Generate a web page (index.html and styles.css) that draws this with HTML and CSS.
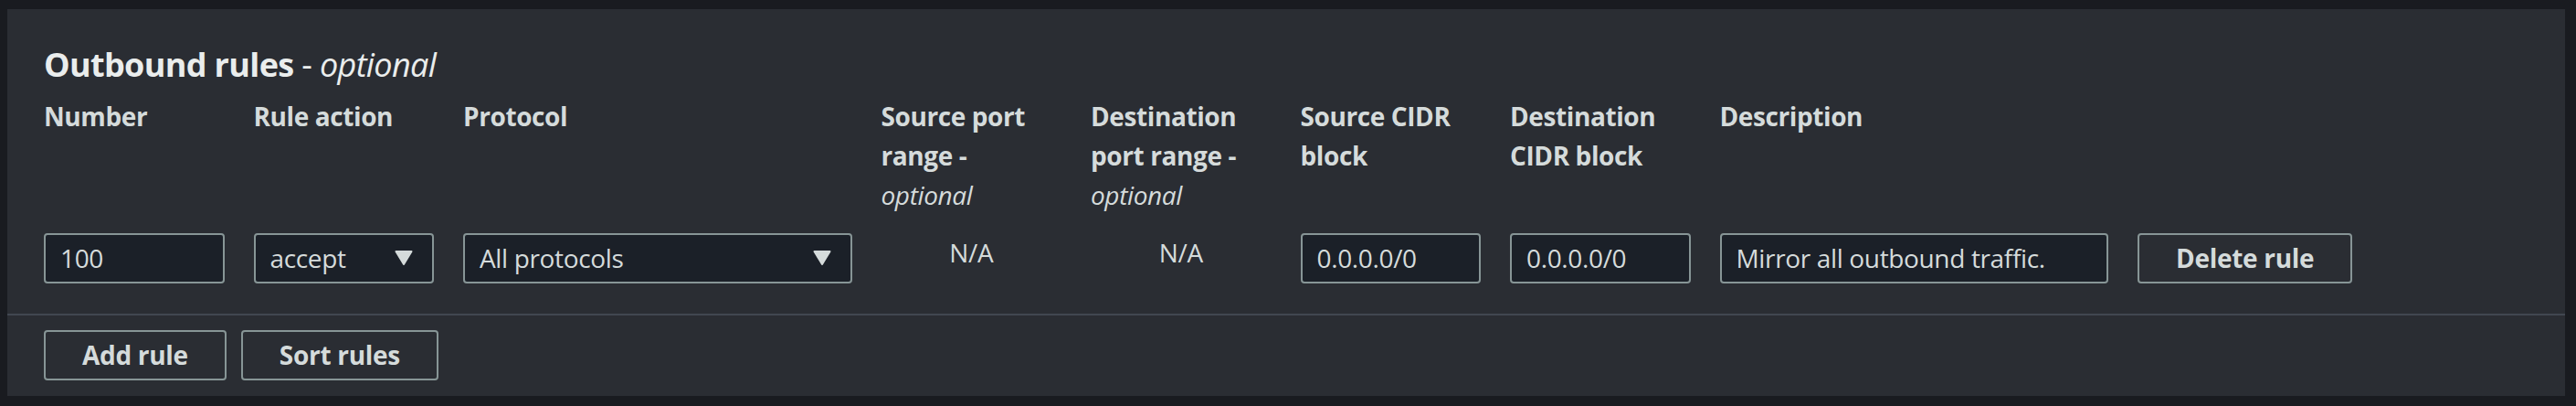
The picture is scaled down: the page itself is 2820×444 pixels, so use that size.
FILE: index.html
```html
<!DOCTYPE html>
<html lang="en">
<head>
<meta charset="utf-8">
<title>Outbound rules</title>
<link rel="stylesheet" href="styles.css">
</head>
<body>
<div class="panel">
  <div class="panel-body">
    <h2 class="title">Outbound rules <span class="title-opt">- <i>optional</i></span></h2>
    <div class="grid">
      <div class="hd">Number</div>
      <div class="hd">Rule action</div>
      <div class="hd">Protocol</div>
      <div class="hd">Source port range - <i>optional</i></div>
      <div class="hd">Destination port range - <i>optional</i></div>
      <div class="hd">Source CIDR block</div>
      <div class="hd">Destination CIDR block</div>
      <div class="hd">Description</div>
      <div class="hd"></div>

      <div class="field">100</div>
      <div class="field select"><span>accept</span><svg class="caret" width="20" height="16" viewBox="0 0 20 16"><path d="M1.5 1 H18.5 L10 15 Z" fill="#d5dbdb" stroke="#d5dbdb" stroke-width="2" stroke-linejoin="round"/></svg></div>
      <div class="field select"><span>All protocols</span><svg class="caret" width="20" height="16" viewBox="0 0 20 16"><path d="M1.5 1 H18.5 L10 15 Z" fill="#d5dbdb" stroke="#d5dbdb" stroke-width="2" stroke-linejoin="round"/></svg></div>
      <div class="na">N/A</div>
      <div class="na">N/A</div>
      <div class="field">0.0.0.0/0</div>
      <div class="field">0.0.0.0/0</div>
      <div class="field">Mirror all outbound traffic.</div>
      <button class="btn btn-row">Delete rule</button>
    </div>
  </div>
  <div class="footer">
    <button class="btn">Add rule</button>
    <button class="btn">Sort rules</button>
  </div>
</div>
</body>
</html>
```

FILE: styles.css
```css
html, body {
  margin: 0;
  padding: 0;
  background: #191b20;
}

body {
  font-family: "Open Sans", "Noto Sans", "Liberation Sans", sans-serif;
  color: #d5dbdb;
  padding: 10px 0 0 8px;
}

.panel {
  width: 2800px;
  background: #2a2d33;
}

.panel-body {
  padding: 39px 40px 33px 40px;
}

.title {
  margin: 0 0 13px 0;
  font-size: 36px;
  line-height: 44px;
  font-weight: 700;
  letter-spacing: -0.65px;
  color: #eaeded;
}

.title-opt {
  font-weight: 400;
}

.grid {
  display: grid;
  grid-template-columns: 197.5px 197.5px 425.5px 197.5px 197.5px 197.5px 197.5px 425.5px auto;
  column-gap: 32px;
  row-gap: 19.5px;
  align-items: start;
}

.hd {
  font-size: 28px;
  line-height: 43px;
  font-weight: 700;
  letter-spacing: -0.4px;
  color: #d5dbdb;
  height: 129px;
}

.hd i {
  font-weight: 400;
}

.field {
  box-sizing: border-box;
  height: 55px;
  border: 2px solid #879596;
  border-radius: 4px;
  background: #1b2028;
  padding: 0 21px 0 16px;
  display: flex;
  align-items: center;
  justify-content: space-between;
  font-size: 28px;
  letter-spacing: -0.35px;
  color: #d5dbdb;
  white-space: nowrap;
}

.caret {
  display: block;
  flex: none;
}

.na {
  font-size: 28px;
  line-height: 43px;
  letter-spacing: -0.35px;
  text-align: center;
  color: #d5dbdb;
}

.btn {
  box-sizing: border-box;
  height: 55px;
  border: 2px solid #879596;
  border-radius: 4px;
  background: transparent;
  padding: 0 40px;
  font-family: inherit;
  font-size: 28px;
  font-weight: 700;
  letter-spacing: -0.3px;
  color: #d5dbdb;
  white-space: nowrap;
}

.btn-row {
  justify-self: start;
}

.footer {
  border-top: 2px solid #414750;
  padding: 16px 40px 17px 40px;
  display: flex;
  gap: 16px;
}
```
